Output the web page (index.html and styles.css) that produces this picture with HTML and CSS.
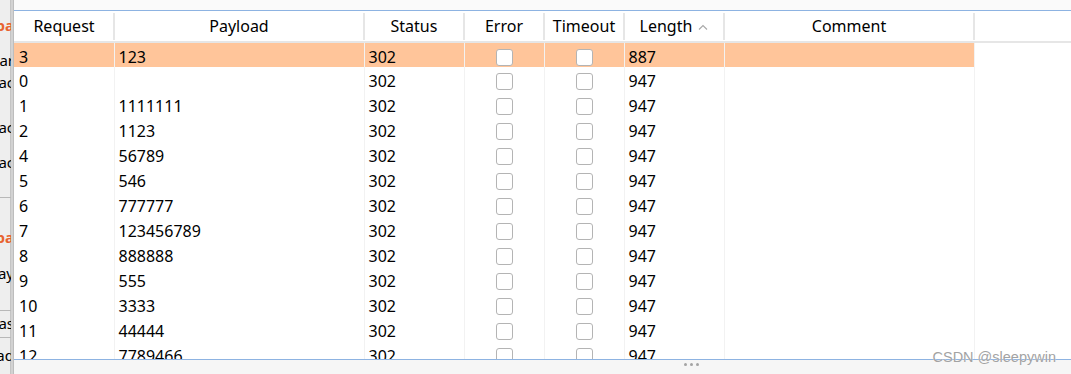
FILE: index.html
```html
<!DOCTYPE html>
<html lang="en">
<head>
    <meta charset="UTF-8">
    <title>Intruder results</title>
    <link rel="stylesheet" href="styles.css">
</head>
<body>

<div class="side">
    <div class="side-item title first"><span>pa</span></div>
    <div class="side-item gap-13"><span>ar</span></div>
    <div class="side-item"><span>ac</span></div>
    <div class="side-item gap-23"><span>ac</span></div>
    <div class="side-item gap-13"><span>ac</span></div>
    <div class="side-rule gap-24"></div>
    <div class="side-item title gap-28"><span>pa</span></div>
    <div class="side-item gap-14"><span>ay</span></div>
    <div class="side-rule gap-26"></div>
    <div class="side-item gap-1"><span>as</span></div>
    <div class="side-rule gap-3"></div>
    <div class="side-item gap-6"><span>ad</span></div>
</div>

<div class="panel">
    <div class="topbar"></div>
    <div class="results">
        <table class="grid">
            <colgroup>
                <col class="w100"><col class="w250"><col class="w100"><col class="w80">
                <col class="w80"><col class="w100"><col class="w250"><col>
            </colgroup>
            <thead>
                <tr>
                    <th>Request</th>
                    <th>Payload</th>
                    <th>Status</th>
                    <th>Error</th>
                    <th>Timeout</th>
                    <th class="sorted">Length
                        <svg class="sort" width="10" height="6" viewBox="0 0 10 6"><path d="M1 5.5 L5 1.5 L9 5.5" fill="none" stroke="#a8a8a8" stroke-width="1.1"/></svg>
                    </th>
                    <th>Comment</th>
                    <th class="filler"></th>
                </tr>
            </thead>
            <tbody id="rows"></tbody>
        </table>
    </div>
    <div class="footer">
        <span class="dot"></span><span class="dot"></span><span class="dot"></span>
    </div>
</div>

<div class="watermark">CSDN @sleepywin</div>

<script>
    const results = [
        [3, '123', 887, true],
        [0, '', 947],
        [1, '1111111', 947],
        [2, '1123', 947],
        [4, '56789', 947],
        [5, '546', 947],
        [6, '777777', 947],
        [7, '123456789', 947],
        [8, '888888', 947],
        [9, '555', 947],
        [10, '3333', 947],
        [11, '44444', 947],
        [12, '7789466', 947]
    ];

    const tbody = document.getElementById('rows');
    results.forEach(([req, payload, length, selected]) => {
        const tr = document.createElement('tr');
        if (selected) tr.className = 'selected';
        tr.innerHTML =
            `<td>${req}</td>` +
            `<td>${payload}</td>` +
            `<td>302</td>` +
            `<td class="check"><span class="box"></span></td>` +
            `<td class="check"><span class="box"></span></td>` +
            `<td>${length}</td>` +
            `<td></td>` +
            `<td class="filler"></td>`;
        tbody.appendChild(tr);
    });
</script>

</body>
</html>
```

FILE: styles.css
```css
html, body {
    margin: 0;
    padding: 0;
}
body {
    width: 1071px;
    height: 374px;
    overflow: hidden;
    display: flex;
    position: relative;
    background-color: #fff;
    color: #000;
    font-family: "Noto Sans", "Noto Sans CJK SC", sans-serif;
}

/* clipped settings pane on the left */
.side {
    width: 11px;
    flex: none;
    background-color: #eeeeee;
    border-right: 2px solid #d2d2d2;
    box-shadow: inset -1px 0 0 #c4c4c4;
    overflow: hidden;
    font-size: 15px;
}
.side-item {
    height: 22px;
    line-height: 22px;
    display: flex;
    justify-content: flex-end;
    white-space: nowrap;
}
.side-item span {
    margin-right: -3px;
}
.side-item.title {
    color: #e8632f;
    font-weight: bold;
}
.side-rule {
    height: 1px;
    background-color: #b8b8b8;
}
.first { margin-top: 14px; }
.gap-1 { margin-top: 1px; }
.gap-3 { margin-top: 3px; }
.gap-6 { margin-top: 6px; }
.gap-13 { margin-top: 13px; }
.gap-14 { margin-top: 14px; }
.gap-23 { margin-top: 23px; }
.gap-24 { margin-top: 24px; }
.gap-26 { margin-top: 26px; }
.gap-28 { margin-top: 28px; }

.panel {
    flex: 1;
    display: flex;
    flex-direction: column;
    border-left: 1px solid #bdbdbd;
}
.topbar {
    height: 10px;
    background-color: #fafafa;
    border-bottom: 1px solid #8db3e2;
}
.results {
    height: 348px;
    overflow: hidden;
    border-bottom: 1px solid #8db3e2;
}
.footer {
    flex: 1;
    background-color: #f6f6f6;
    display: flex;
    align-items: flex-start;
    gap: 3px;
    padding: 3px 0 0 670px;
}
.dot {
    width: 3px;
    height: 3px;
    border-radius: 50%;
    background-color: #a4a4a4;
}

/* results table */
.grid {
    border-collapse: collapse;
    table-layout: fixed;
    width: 100%;
}
.w80 { width: 80px; }
.w100 { width: 100px; }
.w250 { width: 250px; }

.grid th {
    height: 30px;
    padding: 0;
    font-weight: normal;
    font-size: 16px;
    text-align: center;
    position: relative;
    border-bottom: 2px solid #e6e6e6;
}
.grid th::after {
    content: "";
    position: absolute;
    right: -1px;
    top: 2px;
    bottom: 1px;
    width: 2px;
    background-color: #e6e6e6;
}
.grid th.filler::after {
    display: none;
}
.sort {
    margin-left: 2px;
    vertical-align: 2px;
}

.grid tbody tr {
    height: 25px;
}
.grid td {
    padding: 3px 0 0 4px;
    font-size: 16px;
    line-height: 20px;
    white-space: nowrap;
    border-right: 1px solid #f2f2f2;
}
.grid td:first-child {
    padding-left: 5px;
}
.grid td.filler {
    border-right: none;
}
.grid tr.selected td {
    background-color: #ffc59a;
}
.grid tr.selected td.filler {
    background-color: #fff;
}
.grid td.check {
    padding: 1px 0 0;
    text-align: center;
}
.box {
    display: inline-block;
    width: 15px;
    height: 15px;
    border: 1px solid #b4b4b4;
    border-radius: 3px;
    background-color: #fff;
    vertical-align: middle;
}

.watermark {
    position: absolute;
    right: 15px;
    top: 349px;
    font-size: 14.5px;
    color: #a3a3a3;
    text-shadow: 0 0 1px #fff;
    font-family: "Liberation Sans", Arial, sans-serif;
}
```
